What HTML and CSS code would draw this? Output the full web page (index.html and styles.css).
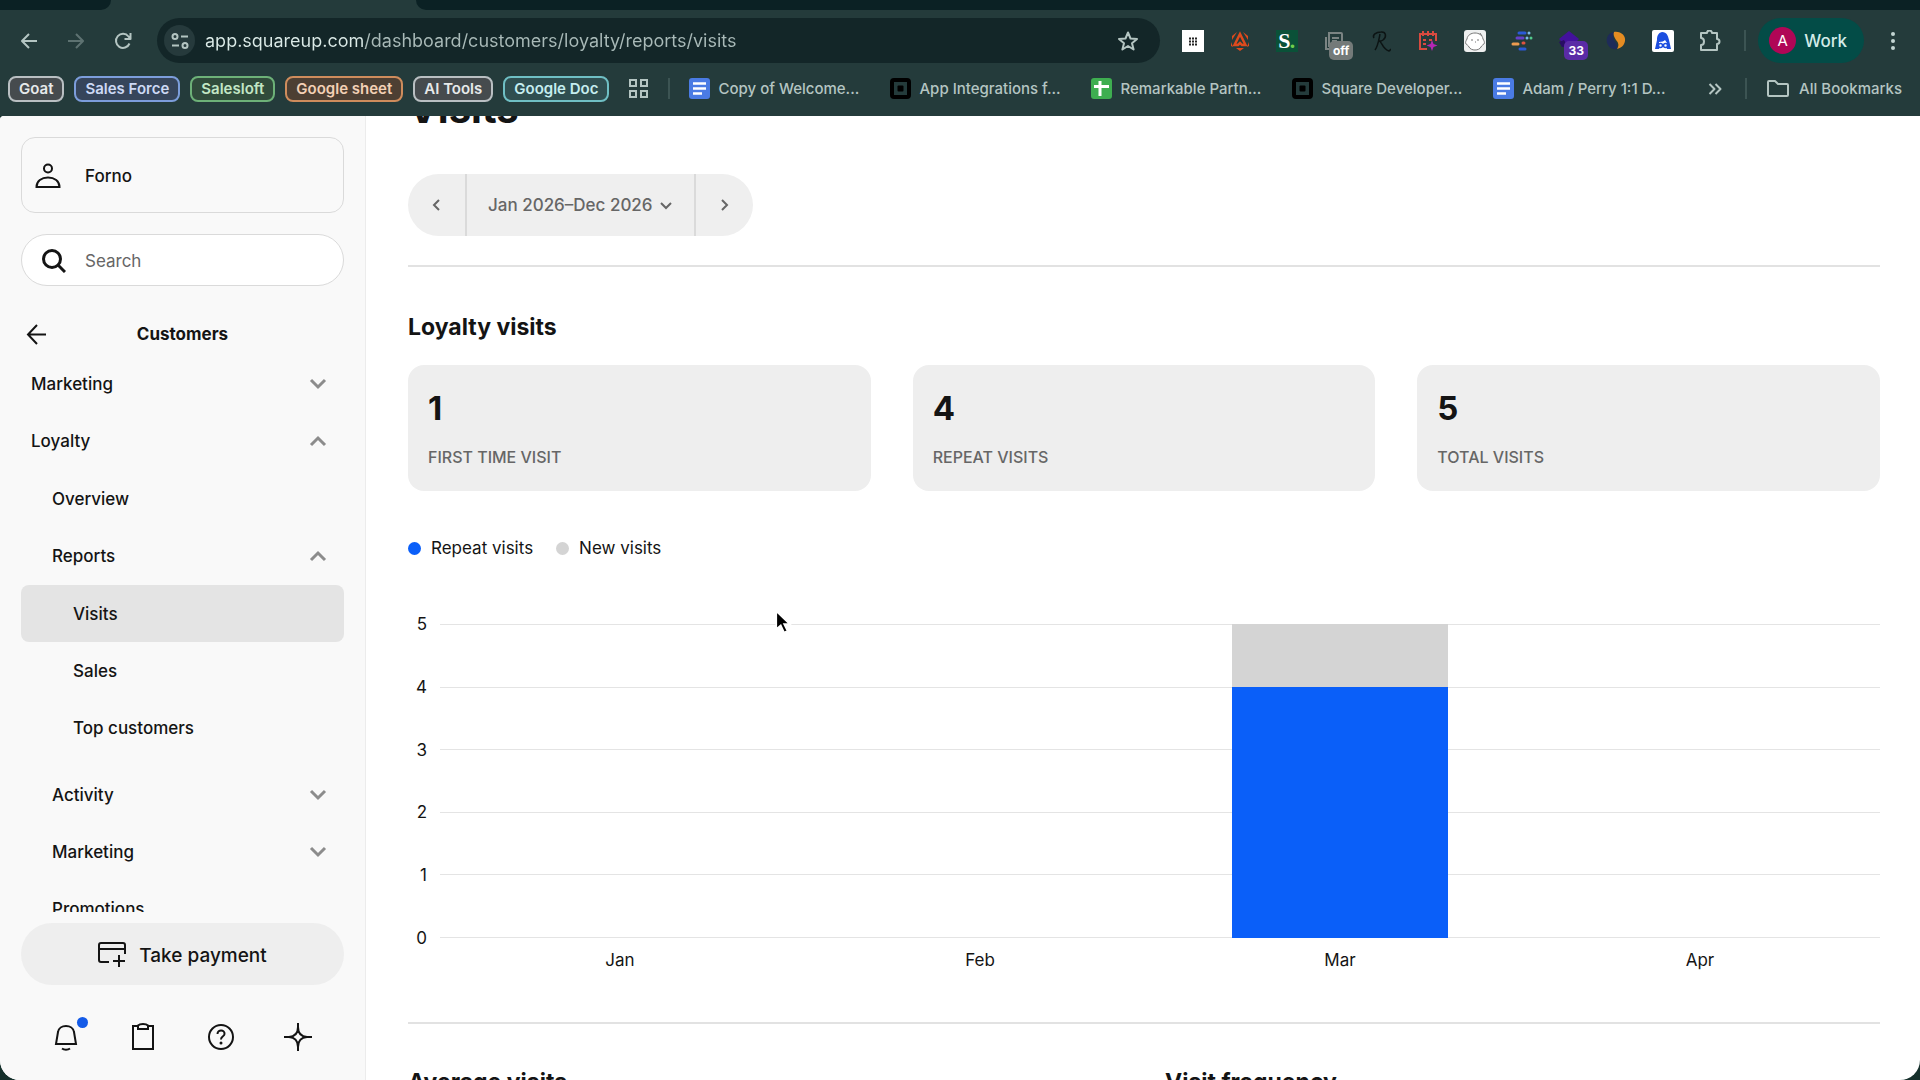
FILE: index.html
```html
<!DOCTYPE html>
<html lang="en">
<head>
  <meta charset="UTF-8" />
  <title>Loyalty visits</title>
  <meta name="viewport" content="width=device-width, initial-scale=1.0" />
  <link rel="stylesheet" href="styles.css">
</head>
<body>
  <svg class="sprite" aria-hidden="true">
    <symbol id="chevron" viewBox="0 0 18 12"><path d="M2 2l7 7 7-7" /></symbol>
    <symbol id="doc" viewBox="0 0 21 21">
      <rect width="21" height="21" rx="3" fill="#4a7be4" />
      <path d="M4 5.500h13M4 10.500h13M4 15.500h9" stroke="#fff" stroke-width="2.500" />
    </symbol>
    <symbol id="square" viewBox="0 0 21 21">
      <rect x="2" y="2" width="17" height="17" rx="2" fill="none" stroke="#000" stroke-width="4" />
      <rect x="7.500" y="7.500" width="6" height="6" rx="1" fill="#000" />
    </symbol>
  </svg>

  <!-- Browser bar -->
  <header class="browser">
    <div class="tabs">
      <div class="tab-left"></div>
      <div class="tab-right"></div>
    </div>

    <div class="toolbar">
      <div class="nav-buttons">
        <button aria-label="Back"><svg class="line" width="18" height="18" viewBox="0 0 18 18"><path d="M17 9H2M9 2L2 9l7 7" /></svg></button>
        <button class="dim" aria-label="Forward"><svg class="line" width="18" height="18" viewBox="0 0 18 18"><path d="M1 9h15M9 2l7 7-7 7" /></svg></button>
        <button aria-label="Reload"><svg class="line" width="18" height="18" viewBox="0 0 18 18"><path d="M15.500 11.500A7 7 0 1 1 14.500 4.500L16 6.500M16.500 1v6h-6" /></svg></button>
      </div>

      <div class="omnibox">
        <button class="site-info" aria-label="Site information">
          <svg class="line" width="18" height="18" viewBox="0 0 18 18"><circle cx="4" cy="4.500" r="2.500" /><path d="M10 4.500h7M1 13.500h7" /><circle cx="14" cy="13.500" r="2.500" /></svg>
        </button>
        <input class="url" type="text" aria-label="Address" value="app.squareup.com/dashboard/customers/loyalty/reports/visits" />
        <button aria-label="Bookmark this page">
          <svg class="line" width="22" height="22" viewBox="0 0 22 22"><path d="M11 2.500l2.500 6 6.500.5-5 4.200 1.600 6.300L11 16l-5.600 3.500L7 13.200 2 9l6.500-.5z" /></svg>
        </button>
      </div>

      <div class="extensions">
        <button aria-label="Grid extension">
          <svg width="22" height="22" viewBox="0 0 22 22"><rect width="22" height="22" fill="#fff" /><path d="M7 8.500h8M7 11.500h8M7 14.500h8" stroke="#222" stroke-width="2" stroke-dasharray="2 1" /></svg>
        </button>
        <button aria-label="Red extension">
          <svg width="22" height="22" viewBox="0 0 22 22"><path d="M11 4l5.500 11H13l-2-2-2 2H5.500z" fill="none" stroke="#de4a1d" stroke-width="2.500" /><path d="M8 2L3 6v4zM14 2l5 4v4zM7 18h8l-4 3zM2 12v4l2 1zM20 12v4l-2 1z" fill="#de4a1d" /></svg>
        </button>
        <button class="ext-s" aria-label="Salesloft">S<i>.</i></button>
        <button class="has-badge" aria-label="Copy extension">
          <svg width="22" height="22" viewBox="0 0 22 22" fill="none" stroke="#7b8483" stroke-width="2"><path d="M6 3h12a1 1 0 0 1 1 1v12H6z" /><path d="M3 7v12h12M9 8h7M9 11h5" /></svg>
          <span class="badge">off</span>
        </button>
        <button aria-label="Script extension">
          <svg width="22" height="22" viewBox="0 0 22 22" fill="none" stroke="#0c1414" stroke-width="1.500"><path d="M5 20C8 16 9 9 10 4M4 8c-2-3 2-6 7-6 5-.5 6 5 2 8-2 1.500-4 1-4 1 3 0 3 8 10 10 2-.5 1-2 1-2" /></svg>
        </button>
        <button aria-label="Calendar extension">
          <svg width="22" height="22" viewBox="0 0 22 22" fill="none" stroke="#d84a3f" stroke-width="2"><path d="M10 19H3V4h16v7M6 1v5M11 1v5M16 1v5M6 10h3M6 14h3M12 10h3" /><path d="M15 10l1.500 4 4 1.500-4 1.500-1.500 4-1.500-4-4-1.500 4-1.500z" fill="#b526b5" stroke="none" /></svg>
        </button>
        <button aria-label="Face extension">
          <svg width="22" height="22" viewBox="0 0 22 22"><rect width="22" height="22" rx="3" fill="#eef0f0" /><path d="M3 9C4 1 18 1 19 9c1 2 2 3 1 5-1 1-2 1-3 3-2 4-10 4-12 0-1-2-2-2-3-3-1-2 0-3 1-5z" fill="#fff" stroke="#777" /><path d="M7 10h2M13 10h2M11 12h1M16 3l2 3" stroke="#777" fill="none" /></svg>
        </button>
        <button aria-label="Dashes extension">
          <svg width="22" height="22" viewBox="0 0 22 22" stroke-width="3" stroke-linecap="round"><path d="M8 3h6M9 19h5" stroke="#2b59d8" /><path d="M6 8h6" stroke="#6540c9" /><path d="M2 14h5" stroke="#eb9b4f" /><path d="M12 13h1" stroke="#e0533f" /><path d="M18 3h0M16 8h0" stroke="#7dbbe5" /><path d="M20 8h0" stroke="#52c98c" /></svg>
        </button>
        <button class="has-badge" aria-label="Purple extension">
          <svg width="22" height="22" viewBox="0 0 22 22"><path d="M11 1l10 8-3 3v5H4v-5L1 9z" fill="#43119c" /><path d="M1 12l5-2 4 7H4z" fill="#280d63" /></svg>
          <span class="badge purple">33</span>
        </button>
        <button aria-label="Swirl extension">
          <svg width="22" height="22" viewBox="0 0 22 22"><path d="M9 2C2 3 0 10 3 15c2 4 7 5 9 4 1-4-1-6-3-9-1-3-1-6 0-8z" fill="#1e2b59" /><path d="M9 2c7-1 12 4 11 9-1 5-4 7-8 8 2-3 2-6-1-9-2-3-3-6-2-8z" fill="#e58c22" /></svg>
        </button>
        <button aria-label="Reader extension">
          <svg width="22" height="22" viewBox="0 0 22 22"><rect width="22" height="22" rx="2" fill="#fff" /><path d="M10 2c5 0 6 4 7 8l2 9h-4l-1-3-3 1-3-1-1 3H3l2-9c0-4 1-7 5-8z" fill="#1c4ee0" /><path d="M7 12c3 0 5-1 6-2l2 3v4H7z" fill="#fff" /><g fill="#fff" stroke="#1c4ee0" stroke-width="1.500"><circle cx="8.500" cy="15.500" r="2" /><circle cx="13.500" cy="15.500" r="2" /></g></svg>
        </button>
        <button aria-label="Extensions">
          <svg class="line" width="22" height="22" viewBox="0 0 22 22"><path d="M2 3h6a2 2 0 0 1 5 0h5v6a2 2 0 0 1 0 5v6H2v-5c4 0 4-7 0-7z" /></svg>
        </button>
      </div>

      <span class="divider"></span>
      <button class="profile"><span class="avatar">A</span>Work</button>
      <button class="more" aria-label="Menu"><svg width="6" height="20" viewBox="0 0 6 20" fill="#c3d5d2"><circle cx="3" cy="3" r="2" /><circle cx="3" cy="10" r="2" /><circle cx="3" cy="17" r="2" /></svg></button>
    </div>

    <div class="bookmarks">
      <div class="groups">
        <button class="chip gray">Goat</button>
        <button class="chip blue">Sales Force</button>
        <button class="chip green">Salesloft</button>
        <button class="chip orange">Google sheet</button>
        <button class="chip gray">AI Tools</button>
        <button class="chip cyan">Google Doc</button>
      </div>
      <button class="apps" aria-label="Apps"><svg width="19" height="19" viewBox="0 0 19 19" fill="none" stroke="#b4c5c2" stroke-width="2"><path d="M1 1h6v6H1zM12 1h6v6h-6zM1 12h6v6H1zM12 12h6v6h-6z" /></svg></button>
      <span class="divider"></span>
      <nav class="links" aria-label="Bookmarks">
        <a href="#"><svg width="21" height="21"><use href="#doc" /></svg><span>Copy of Welcome...</span></a>
        <a href="#"><svg width="21" height="21"><use href="#square" /></svg><span>App Integrations f...</span></a>
        <a href="#"><svg width="21" height="21" viewBox="0 0 21 21"><rect width="21" height="21" rx="3" fill="#3eae50" /><path d="M3 8.500h15M9 3v15" stroke="#fff" stroke-width="3" /></svg><span>Remarkable Partn...</span></a>
        <a href="#"><svg width="21" height="21"><use href="#square" /></svg><span>Square Developer...</span></a>
        <a href="#"><svg width="21" height="21"><use href="#doc" /></svg><span>Adam / Perry 1:1 D...</span></a>
      </nav>
      <button class="overflow" aria-label="More bookmarks"><svg class="line" width="14" height="12" viewBox="0 0 14 12"><path d="M1.500 1l5 5-5 5M7.500 1l5 5-5 5" /></svg></button>
      <span class="divider"></span>
      <a class="all" href="#"><svg class="line" width="22" height="17" viewBox="0 0 22 17"><path d="M2 1h6l3 3h9a1 1 0 0 1 1 1v10a1 1 0 0 1-1 1H2a1 1 0 0 1-1-1V2a1 1 0 0 1 1-1z" /></svg>All Bookmarks</a>
    </div>
  </header>

  <div class="page">
    <aside class="sidebar">
      <button class="account">
        <svg class="ink" width="26" height="26" viewBox="0 0 26 26"><circle cx="13" cy="5.500" r="4" /><path d="M1.500 24c0-6 5-9.500 11.500-9.500S24.500 18 24.500 24z" /></svg>
        Forno
      </button>
      <label class="search">
        <svg class="ink" width="24" height="24" viewBox="0 0 24 24"><circle cx="10" cy="10" r="8.500" /><path d="M16 16l7 7" /></svg>
        <input type="text" placeholder="Search" aria-label="Search" />
      </label>
      <div class="section-title">
        <button aria-label="Back to main menu"><svg class="ink" width="21" height="21" viewBox="0 0 21 21"><path d="M20 10.500H2M11 1l-9 9.500 9 9.500" /></svg></button>
        <h2>Customers</h2>
      </div>

      <nav class="menu" aria-label="Customers">
        <ul>
          <li><a href="#">Marketing <svg class="chev" width="18" height="12"><use href="#chevron" /></svg></a></li>
          <li>
            <a href="#">Loyalty <svg class="chev up" width="18" height="12"><use href="#chevron" /></svg></a>
            <ul>
              <li><a href="#">Overview</a></li>
              <li>
                <a href="#">Reports <svg class="chev up" width="18" height="12"><use href="#chevron" /></svg></a>
                <ul>
                  <li><a class="active" href="#" aria-current="page">Visits</a></li>
                  <li><a href="#">Sales</a></li>
                  <li><a href="#">Top customers</a></li>
                </ul>
              </li>
              <li><a href="#">Activity <svg class="chev" width="18" height="12"><use href="#chevron" /></svg></a></li>
              <li><a href="#">Marketing <svg class="chev" width="18" height="12"><use href="#chevron" /></svg></a></li>
              <li><a href="#">Promotions</a></li>
            </ul>
          </li>
        </ul>
      </nav>

      <button class="payment">
        <svg class="ink" width="28" height="26" viewBox="0 0 28 26"><path d="M11 20H3a2 2 0 0 1-2-2V3a2 2 0 0 1 2-2h22a2 2 0 0 1 2 2v9M1 7h26M21 13v12M15 19h12" /></svg>
        Take payment
      </button>

      <div class="quick">
        <button class="notify" aria-label="Notifications"><svg class="ink" width="28" height="28" viewBox="0 0 28 28"><path d="M4 21l2-12c1-8 15-8 16 0l2 12zM10 25.500c2 1.500 6 1.500 8 0" /></svg></button>
        <button aria-label="Tasks"><svg class="ink" width="28" height="28" viewBox="0 0 28 28"><path d="M9 3H4v23h20V3h-5M9 2.500V6h10V2.500C17 .5 11 .5 9 2.500z" /></svg></button>
        <button aria-label="Help"><svg class="ink" width="28" height="28" viewBox="0 0 28 28"><circle cx="14" cy="14" r="12" /><path d="M10.500 11c0-5 7.500-4.500 7 0 0 2.500-3.500 2-3.500 5.500" /><circle class="dot" cx="14" cy="20" r="1.500" /></svg></button>
        <button aria-label="Assistant"><svg class="ink" width="28" height="28" viewBox="0 0 28 28"><path d="M14 0v4c0 6-3 9.500-9 10H0h5c6 .5 9 4 9 10v4-4c0-6 3-9.500 9-10h5-5c-6-.5-9-4-9-10z" /></svg></button>
      </div>
    </aside>

    <main class="content">
      <h1>Visits</h1>

      <div class="period">
        <button aria-label="Previous period"><svg width="9" height="14" viewBox="0 0 9 14"><path d="M7 2L2 7l5 5" /></svg></button>
        <button class="range">Jan 2026–Dec 2026 <svg width="14" height="9" viewBox="0 0 14 9"><path d="M2 2l5 5 5-5" /></svg></button>
        <button aria-label="Next period"><svg width="9" height="14" viewBox="0 0 9 14"><path d="M2 2l5 5-5 5" /></svg></button>
      </div>

      <section class="block">
        <h2>Loyalty visits</h2>
        <div class="cards">
          <div class="card"><strong>1</strong><span>FIRST TIME VISIT</span></div>
          <div class="card"><strong>4</strong><span>REPEAT VISITS</span></div>
          <div class="card"><strong>5</strong><span>TOTAL VISITS</span></div>
        </div>

        <div class="legend">
          <span class="repeat">Repeat visits</span>
          <span class="new">New visits</span>
        </div>

        <div class="chart">
          <div class="y-axis"><span>5</span><span>4</span><span>3</span><span>2</span><span>1</span><span>0</span></div>
          <div class="plot">
            <div class="grid"><hr><hr><hr><hr><hr><hr></div>
            <div class="months">
              <div class="bar"></div>
              <div class="bar"></div>
              <div class="bar">
                <div class="new" style="height: 20%"></div>
                <div class="repeat" style="height: 80%"></div>
              </div>
              <div class="bar"></div>
            </div>
          </div>
          <div class="x-axis"><span>Jan</span><span>Feb</span><span>Mar</span><span>Apr</span></div>
        </div>
      </section>

      <section class="block columns">
        <h2>Average visits</h2>
        <h2>Visit frequency</h2>
      </section>
    </main>
  </div>

  <svg class="cursor" width="18" height="27" viewBox="0 0 16 24" aria-hidden="true"><path d="M2 2v16l4-3.500 3 6.500 3-1.500-3-6h5z" fill="#000" stroke="#fff" stroke-width="1.500" /></svg>
</body>
</html>
```
FILE: styles.css
```css
:root {
  --bar: #243b3b;
  --bar-dark: #0b2124;
  --bar-text: #b4c5c2;
  --ink: #141414;
  --muted: #666;
  --line: #dadada;
  --fill: #eee;
  --blue: #0a5ff9;
  --gray: #d4d4d4;
}

* {
  box-sizing: border-box;
}

body {
  margin: 0;
  height: 100vh;
  display: flex;
  flex-direction: column;
  overflow: hidden;
  font-family: Inter, "Liberation Sans", sans-serif;
  font-size: 17px;
  color: var(--ink);
  background: #16302c;
}

button {
  padding: 0;
  border: none;
  background: none;
  font: inherit;
  color: inherit;
  display: flex;
  align-items: center;
  justify-content: center;
  cursor: pointer;
}

a {
  color: inherit;
  text-decoration: none;
}

svg {
  flex-shrink: 0;
}

.sprite {
  position: absolute;
  width: 0;
  height: 0;
}

.line {
  fill: none;
  stroke: var(--bar-text);
  stroke-width: 2;
  stroke-linejoin: round;
}

.ink {
  fill: none;
  stroke: var(--ink);
  stroke-width: 2;
}

.ink .dot {
  fill: var(--ink);
  stroke: none;
}

/* Browser bar */
.browser {
  flex-shrink: 0;
  background: var(--bar);
  color: var(--bar-text);
}

.tabs {
  display: flex;
  justify-content: space-between;
  height: 10px;
}

.tab-left {
  width: 111px;
  background: var(--bar-dark);
  border-bottom-right-radius: 10px;
}

.tab-right {
  width: calc(100% - 416px);
  background: var(--bar-dark);
  border-bottom-left-radius: 10px;
}

.toolbar {
  display: flex;
  align-items: center;
  padding: 8px 24px 8px 20px;
  height: 61px;
}

.nav-buttons {
  display: flex;
  gap: 29px;
  margin-right: 25px;
}

.dim {
  opacity: 0.4;
}

.omnibox {
  flex: 1;
  display: flex;
  align-items: center;
  height: 45px;
  padding: 0 21px 0 7px;
  border-radius: 23px;
  background: #132628;
}

.site-info {
  width: 31px;
  height: 31px;
  border-radius: 50%;
  background: #263a3c;
}

/* the host is brighter than the path */
.url {
  flex: 1;
  margin-left: 10px;
  padding: 0;
  border: none;
  outline: none;
  font: inherit;
  font-size: 18px;
  color: transparent;
  background: linear-gradient(to right, #dcebe8 160px, #a9bab8 160px);
  -webkit-background-clip: text;
  background-clip: text;
}

.extensions {
  display: flex;
  gap: 25px;
  margin: 0 23px 0 22px;
}

.extensions button {
  width: 22px;
  height: 22px;
}

.ext-s {
  background: #0a5138;
  color: #fff;
  font-family: "Liberation Serif", serif;
  font-size: 22px;
  font-weight: bold;
}

.ext-s i {
  color: #6fcf4c;
}

.has-badge {
  position: relative;
}

.badge {
  position: absolute;
  top: 11px;
  left: 6px;
  min-width: 24px;
  padding: 0 3px;
  border-radius: 5px;
  background: #747a79;
  color: #fff;
  font-size: 12px;
  font-weight: 700;
  line-height: 19px;
}

.badge.purple {
  background: #5a2ba6;
}

.divider {
  width: 2px;
  height: 21px;
  background: #3c5453;
}

.profile {
  height: 45px;
  margin: 0 26px 0 12px;
  padding: 0 17px 0 11px;
  gap: 8px;
  border-radius: 23px;
  background: #034c47;
  color: #d3ebe7;
  font-weight: 500;
}

.avatar {
  width: 27px;
  height: 27px;
  border-radius: 50%;
  background: #b00656;
  color: #fff;
  font-size: 15px;
  font-weight: 400;
  line-height: 27px;
}

.bookmarks {
  display: flex;
  align-items: center;
  height: 45px;
  padding: 0 18px 10px 8px;
  font-size: 15px;
  font-weight: 500;
}

.groups {
  display: flex;
  gap: 10px;
}

.chip {
  height: 26px;
  padding: 0 9px;
  border: 2px solid;
  border-radius: 8px;
  font-weight: 600;
  white-space: nowrap;
}

.chip.gray { background: #464b4e; border-color: #b9bfc2; color: #e6e9ea; }
.chip.blue { background: #36455b; border-color: #7c9ddb; color: #cdd9f5; }
.chip.green { background: #304b3b; border-color: #6db178; color: #c2e6c5; }
.chip.orange { background: #4d3f33; border-color: #cf8c5c; color: #f3d0b5; }
.chip.cyan { background: #2f4e50; border-color: #6fbfc4; color: #c5edef; }

.apps {
  margin: 0 20px;
}

.links {
  flex: 1;
  display: flex;
  gap: 29px;
  margin-left: 19px;
  min-width: 0;
}

.links a,
.all {
  display: flex;
  align-items: center;
  gap: 8px;
  white-space: nowrap;
}

.links span {
  width: 143px;
}

.overflow {
  margin-right: 23px;
}

.all {
  gap: 10px;
  margin-left: 20px;
}

/* Page */
.page {
  flex: 1;
  display: flex;
  min-height: 0;
  overflow: hidden;
  border-radius: 4px 0 20px 20px;
  background: #fff;
}

.sidebar {
  width: 366px;
  flex-shrink: 0;
  display: flex;
  flex-direction: column;
  padding: 21px 21px 0;
  border-right: 1px solid #ececec;
  background: #f9f9f9;
  font-weight: 500;
}

.account {
  height: 76px;
  flex-shrink: 0;
  justify-content: flex-start;
  gap: 24px;
  padding: 1px 13px 0;
  border: 1px solid var(--line);
  border-radius: 14px;
}

.search {
  display: flex;
  align-items: center;
  flex-shrink: 0;
  gap: 19px;
  height: 52px;
  margin-top: 21px;
  padding: 1px 20px 0;
  border: 1px solid var(--line);
  border-radius: 26px;
  background: #fff;
}

.search .ink {
  stroke-width: 3;
}

.search input {
  width: 100%;
  padding: 0;
  border: none;
  outline: none;
  background: none;
  font: inherit;
  font-weight: 400;
}

.search input::placeholder {
  color: var(--muted);
}

.section-title {
  display: grid;
  grid-template-columns: 30px 1fr 30px;
  align-items: center;
  flex-shrink: 0;
  height: 42px;
  margin-top: 27px;
}

.section-title h2 {
  margin: 0;
  text-align: center;
  font-size: 17px;
  font-weight: 700;
}

.menu {
  flex: 1;
  min-height: 0;
  overflow: hidden;
}

.menu ul {
  margin: 0;
  padding: 0;
  list-style: none;
}

.menu ul ul {
  padding-top: 1px;
}

.menu ul ul ul {
  padding-bottom: 10px;
}

.menu a {
  display: flex;
  align-items: center;
  justify-content: space-between;
  height: 57px;
  padding: 0 17px 0 10px;
  border-radius: 8px;
}

.menu ul ul a {
  padding-left: 31px;
}

.menu ul ul ul a {
  padding-left: 52px;
}

.menu .active {
  background: #e4e4e4;
}

.chev {
  fill: none;
  stroke: #8c8c8c;
  stroke-width: 3;
}

.chev.up {
  transform: rotate(180deg);
}

.payment {
  flex-shrink: 0;
  gap: 13px;
  height: 62px;
  margin-top: 11px;
  padding-top: 2px;
  border-radius: 31px;
  background: var(--fill);
  font-size: 19px;
}

.quick {
  display: flex;
  flex-shrink: 0;
  justify-content: space-between;
  height: 95px;
  padding: 0 32px 0 31px;
}

.quick button {
  height: 104px;
}

.notify {
  position: relative;
}

.notify::after {
  content: "";
  position: absolute;
  top: 32px;
  right: -8px;
  width: 11px;
  height: 11px;
  border-radius: 50%;
  background: #145be8;
}

.content {
  flex: 1;
  min-width: 0;
  padding: 0 40px 0 42px;
}

/* the page is scrolled past its title */
h1 {
  margin: -30px 0 42px;
  font-size: 40px;
  line-height: 46px;
}

.period {
  display: inline-flex;
  height: 62px;
  border-radius: 31px;
  background: #efefef;
  color: var(--muted);
  font-weight: 500;
}

.period button {
  width: 57px;
}

.period .range {
  width: auto;
  gap: 6px;
  padding: 0 21px;
  border: solid var(--line);
  border-width: 0 2px;
}

.period svg {
  fill: none;
  stroke: var(--muted);
  stroke-width: 2;
}

.block {
  margin-top: 29px;
  border-top: 2px solid #e2e2e2;
}

.block h2 {
  margin: 44px 0 22px;
  font-size: 23px;
  line-height: 32px;
}

.cards {
  display: grid;
  grid-template-columns: repeat(3, 1fr);
  gap: 42px;
}

.card {
  display: flex;
  flex-direction: column;
  gap: 18px;
  height: 126px;
  padding: 23px 20px;
  border-radius: 16px;
  background: var(--fill);
}

.card strong {
  font-size: 33px;
  line-height: 40px;
}

.card span {
  color: var(--muted);
  font-size: 16px;
  font-weight: 500;
  line-height: 22px;
}

.legend {
  display: flex;
  gap: 23px;
  margin-top: 45px;
  line-height: 24px;
}

.legend span {
  display: flex;
  align-items: center;
  gap: 10px;
}

.legend span::before {
  content: "";
  width: 13px;
  height: 13px;
  border-radius: 50%;
  background: var(--gray);
}

.legend .repeat::before {
  background: var(--blue);
}

.chart {
  display: grid;
  grid-template-columns: 19px 1fr;
  column-gap: 13px;
  margin-top: 52px;
}

.y-axis {
  display: flex;
  flex-direction: column;
  justify-content: space-between;
  align-items: flex-end;
  line-height: 24px;
}

.plot {
  display: grid;
  height: 314px;
  margin: 12px 0;
}

.grid,
.months {
  grid-area: 1 / 1;
}

.grid {
  display: flex;
  flex-direction: column;
  justify-content: space-between;
}

.grid hr {
  width: 100%;
  height: 1px;
  margin: 0;
  border: none;
  background: #e4e4e4;
}

.months,
.x-axis {
  display: grid;
  grid-template-columns: repeat(4, 1fr);
  justify-items: center;
}

.bar {
  width: 60%;
}

.bar .new {
  background: var(--gray);
}

.bar .repeat {
  background: var(--blue);
}

.x-axis {
  grid-column: 2;
  line-height: 20px;
}

.columns {
  display: grid;
  grid-template-columns: 1fr 1fr;
  gap: 42px;
  margin-top: 52px;
}

.columns h2 {
  margin-top: 42px;
}

/* mouse pointer */
.cursor {
  position: absolute;
  left: 774px;
  top: 609px;
}
```
